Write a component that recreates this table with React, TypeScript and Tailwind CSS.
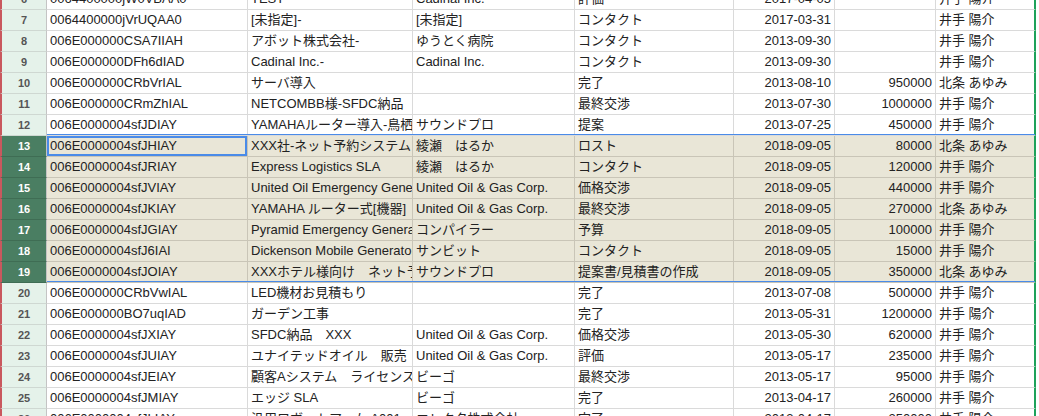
import React from "react";

type Row = {
  n: number;
  a: string;
  b: string;
  c: string;
  d: string;
  e: string;
  f: string;
  g: string;
};

const rows: Row[] = [
  { n: 6, a: "0064400000jW0VBAA0", b: "TEST", c: "Cadinal Inc.", d: "評価", e: "2017-04-05", f: "", g: "井手 陽介" },
  { n: 7, a: "0064400000jVrUQAA0", b: "[未指定]-", c: "[未指定]", d: "コンタクト", e: "2017-03-31", f: "", g: "井手 陽介" },
  { n: 8, a: "006E000000CSA7IIAH", b: "アボット株式会社-", c: "ゆうとく病院", d: "コンタクト", e: "2013-09-30", f: "", g: "井手 陽介" },
  { n: 9, a: "006E000000DFh6dIAD", b: "Cadinal Inc.-", c: "Cadinal Inc.", d: "コンタクト", e: "2013-09-30", f: "", g: "井手 陽介" },
  { n: 10, a: "006E000000CRbVrIAL", b: "サーバ導入", c: "", d: "完了", e: "2013-08-10", f: "950000", g: "北条 あゆみ" },
  { n: 11, a: "006E000000CRmZhIAL", b: "NETCOMBB様-SFDC納品", c: "", d: "最終交渉", e: "2013-07-30", f: "1000000", g: "井手 陽介" },
  { n: 12, a: "006E0000004sfJDIAY", b: "YAMAHAルーター導入-鳥栖", c: "サウンドプロ", d: "提案", e: "2013-07-25", f: "450000", g: "井手 陽介" },
  { n: 13, a: "006E0000004sfJHIAY", b: "XXX社-ネット予約システム", c: "綾瀬　はるか", d: "ロスト", e: "2018-09-05", f: "80000", g: "北条 あゆみ" },
  { n: 14, a: "006E0000004sfJRIAY", b: "Express Logistics SLA", c: "綾瀬　はるか", d: "コンタクト", e: "2018-09-05", f: "120000", g: "井手 陽介" },
  { n: 15, a: "006E0000004sfJVIAY", b: "United Oil Emergency Generators", c: "United Oil & Gas Corp.", d: "価格交渉", e: "2018-09-05", f: "440000", g: "井手 陽介" },
  { n: 16, a: "006E0000004sfJKIAY", b: "YAMAHA ルーター式[機器]", c: "United Oil & Gas Corp.", d: "最終交渉", e: "2018-09-05", f: "270000", g: "北条 あゆみ" },
  { n: 17, a: "006E0000004sfJGIAY", b: "Pyramid Emergency Generators", c: "コンパイラー", d: "予算", e: "2018-09-05", f: "100000", g: "井手 陽介" },
  { n: 18, a: "006E0000004sfJ6IAI", b: "Dickenson Mobile Generators", c: "サンビット", d: "コンタクト", e: "2018-09-05", f: "15000", g: "井手 陽介" },
  { n: 19, a: "006E0000004sfJOIAY", b: "XXXホテル様向け　ネット予約", c: "サウンドプロ", d: "提案書/見積書の作成", e: "2018-09-05", f: "350000", g: "北条 あゆみ" },
  { n: 20, a: "006E000000CRbVwIAL", b: "LED機材お見積もり", c: "", d: "完了", e: "2013-07-08", f: "500000", g: "井手 陽介" },
  { n: 21, a: "006E000000BO7uqIAD", b: "ガーデン工事", c: "", d: "完了", e: "2013-05-31", f: "1200000", g: "井手 陽介" },
  { n: 22, a: "006E0000004sfJXIAY", b: "SFDC納品　XXX", c: "United Oil & Gas Corp.", d: "価格交渉", e: "2013-05-30", f: "620000", g: "井手 陽介" },
  { n: 23, a: "006E0000004sfJUIAY", b: "ユナイテッドオイル　販売", c: "United Oil & Gas Corp.", d: "評価", e: "2013-05-17", f: "235000", g: "井手 陽介" },
  { n: 24, a: "006E0000004sfJEIAY", b: "顧客Aシステム　ライセンス", c: "ビーゴ", d: "最終交渉", e: "2013-05-17", f: "95000", g: "井手 陽介" },
  { n: 25, a: "006E0000004sfJMIAY", b: "エッジ SLA", c: "ビーゴ", d: "完了", e: "2013-04-17", f: "260000", g: "井手 陽介" },
  { n: 26, a: "006E0000004sfJLIAY", b: "汎用ロボットアーム A001", c: "エレクタ株式会社", d: "完了", e: "2013-04-17", f: "250000", g: "井手 陽介" },
];

const font = { fontFamily: '"Liberation Sans", Arial, "Noto Sans CJK JP", sans-serif' };

function SheetRow({ r }: { r: Row }) {
  const sel = r.n >= 13 && r.n <= 19;
  const line = sel ? "border-[#c9c5b7]" : "border-[#dadada]";
  const bg = sel ? "bg-[#e9e6d7]" : "bg-white";
  const cell = `h-full shrink-0 border-r border-b ${line} ${bg} overflow-hidden whitespace-nowrap px-[3px] leading-[20px]`;
  return (
    <div className="flex h-[21px]">
      <div
        className={`h-full w-[47px] shrink-0 border-l-2 border-l-[#c9585e] border-r border-b border-r-[#c4c4c4] ${
          sel ? "bg-[#4a7e62] text-white border-b-[#3f6d54]" : "bg-[#e5f2ea] text-[#555] border-b-[#cfd8d2]"
        } flex items-center justify-center text-[11px] font-bold`}
      >
        {r.n}
      </div>
      <div className={`${cell} w-[201px] ${r.n === 13 ? "ring-2 ring-inset ring-[#4a8be8]" : ""}`}>{r.a}</div>
      <div className={`${cell} w-[165px]`}>{r.b}</div>
      <div className={`${cell} w-[162px]`}>{r.c}</div>
      <div className={`${cell} w-[159px]`}>{r.d}</div>
      <div className={`${cell} w-[101px] text-right`}>{r.e}</div>
      <div className={`${cell} w-[101px] text-right`}>{r.f}</div>
      <div className={`${cell} w-[100px] border-r-2 border-r-[#1ea25a]`}>{r.g}</div>
      <div className="h-full flex-1 bg-white" />
    </div>
  );
}

export default function App() {
  return (
    <div className="w-[1039px] h-[416px] overflow-hidden bg-white text-[13px] text-[#222]" style={font}>
      <div className="mt-[-11px] relative">
        {rows.map((r) => (
          <SheetRow key={r.n} r={r} />
        ))}
        {/* range selection outline over rows 13-19 */}
        <div className="absolute left-[47px] w-[988px] top-[145px] h-[148px] border-y border-[#4a8be8] pointer-events-none" />
      </div>
    </div>
  );
}
